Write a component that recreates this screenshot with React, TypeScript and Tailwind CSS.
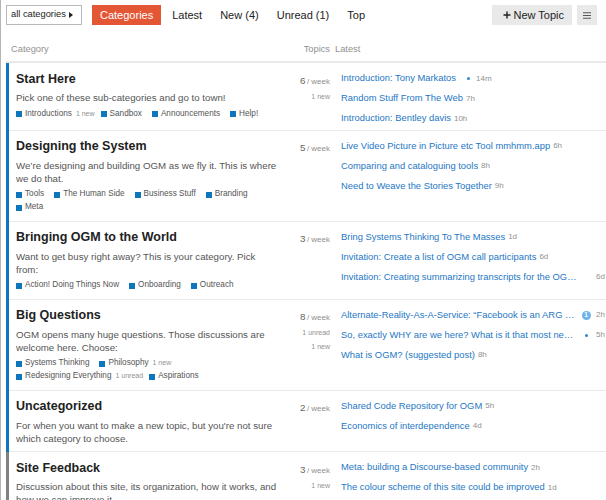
import React from "react";

type Latest = { t: string; time: string; trunc?: boolean; dot?: boolean; badge?: string };
type Sub = { name: string; count?: string };
type Row = {
  title: string;
  desc: string[];
  subs: Sub[];
  count: string;
  extra: string[];
  grey?: boolean;
  latest: Latest[];
};

const rows: Row[] = [
  {
    title: "Start Here",
    desc: ["Pick one of these sub-categories and go to town!"],
    subs: [{ name: "Introductions", count: "1 new" }, { name: "Sandbox" }, { name: "Announcements" }, { name: "Help!" }],
    count: "6",
    extra: ["1 new"],
    latest: [
      { t: "Introduction: Tony Markatos", time: "14m", dot: true },
      { t: "Random Stuff From The Web", time: "7h" },
      { t: "Introduction: Bentley davis", time: "10h" },
    ],
  },
  {
    title: "Designing the System",
    desc: ["We\u2019re designing and building OGM as we fly it. This is where", "we do that."],
    subs: [{ name: "Tools" }, { name: "The Human Side" }, { name: "Business Stuff" }, { name: "Branding" }, { name: "Meta" }],
    count: "5",
    extra: [],
    latest: [
      { t: "Live Video Picture in Picture etc Tool mmhmm.app", time: "6h" },
      { t: "Comparing and cataloguing tools", time: "8h" },
      { t: "Need to Weave the Stories Together", time: "9h" },
    ],
  },
  {
    title: "Bringing OGM to the World",
    desc: ["Want to get busy right away? This is your category. Pick", "from:"],
    subs: [{ name: "Action! Doing Things Now" }, { name: "Onboarding" }, { name: "Outreach" }],
    count: "3",
    extra: [],
    latest: [
      { t: "Bring Systems Thinking To The Masses", time: "1d" },
      { t: "Invitation: Create a list of OGM call participants", time: "6d" },
      { t: "Invitation: Creating summarizing transcripts for the OGM call recordings", time: "6d", trunc: true },
    ],
  },
  {
    title: "Big Questions",
    desc: ["OGM opens many huge questions. Those discussions are", "welcome here. Choose:"],
    subs: [
      { name: "Systems Thinking" },
      { name: "Philosophy", count: "1 new" },
      { name: "Redesigning Everything", count: "1 unread" },
      { name: "Aspirations" },
    ],
    count: "8",
    extra: ["1 unread", "1 new"],
    latest: [
      { t: "Alternate-Reality-As-A-Service: \u201CFacebook is an ARG (alternate reality game)\u201D", time: "2h", trunc: true, badge: "1" },
      { t: "So, exactly WHY are we here? What is it that most needs doing?", time: "5h", trunc: true, dot: true },
      { t: "What is OGM? (suggested post)", time: "8h" },
    ],
  },
  {
    title: "Uncategorized",
    desc: ["For when you want to make a new topic, but you're not sure", "which category to choose."],
    subs: [],
    count: "2",
    extra: [],
    latest: [
      { t: "Shared Code Repository for OGM", time: "5h" },
      { t: "Economics of interdependence", time: "4d" },
    ],
  },
  {
    title: "Site Feedback",
    desc: ["Discussion about this site, its organization, how it works, and", "how we can improve it."],
    subs: [],
    count: "3",
    extra: ["1 new"],
    grey: true,
    latest: [
      { t: "Meta: building a Discourse-based community", time: "2h" },
      { t: "The colour scheme of this site could be improved", time: "1d" },
    ],
  },
];

function LatestItem({ item }: { item: Latest }) {
  return (
    <div className="flex items-center h-[20px] whitespace-nowrap">
      <span
        className={
          item.trunc
            ? "block w-[236px] overflow-hidden text-ellipsis whitespace-nowrap text-[9.4px] text-[#1e77c5]"
            : "text-[9.4px] text-[#1e77c5]"
        }
      >
        {item.t}
      </span>
      {item.trunc ? (
        <span className="w-[18px] flex items-center justify-center shrink-0">
          {item.badge ? (
            <span className="w-[9px] h-[9px] rounded-full bg-[#6cb4ea] text-white text-[6.5px] font-bold flex items-center justify-center leading-none">
              {item.badge}
            </span>
          ) : item.dot ? (
            <span className="w-[3px] h-[3px] rounded-full bg-[#2f86d6]" />
          ) : null}
        </span>
      ) : item.dot ? (
        <span className="ml-[7px] w-[10px] flex items-center justify-center shrink-0">
          <span className="w-[3px] h-[3px] rounded-full bg-[#2f86d6]" />
        </span>
      ) : null}
      <span className={item.trunc ? "ml-[1px] text-[8px] text-[#919191]" : "ml-[3px] text-[8px] text-[#919191]"}>
        {item.time}
      </span>
    </div>
  );
}

function CategoryRow({ row }: { row: Row }) {
  return (
    <div className="flex">
      <div className={row.grey ? "w-[3px] shrink-0 bg-[#808281]" : "w-[3px] shrink-0 bg-[#0e76bd]"} />
      <div className="flex flex-1 border-b border-[#e9e9e9]">
        <div className="w-[281px] shrink-0 pl-[7px] pt-[7.5px] pb-[6.5px]">
          <div className="w-[262px]">
            <div className="text-[12.5px] leading-[16px] font-bold text-[#222]">{row.title}</div>
            <div className="mt-[4.5px] text-[9.7px] leading-[13px] text-[#555]">
              {row.desc.map((l) => (
                <div key={l} className="whitespace-nowrap">
                  {l}
                </div>
              ))}
            </div>
            {row.subs.length > 0 && (
              <div className="mt-[3.5px] flex flex-wrap">
                {row.subs.map((s) => (
                  <div
                    key={s.name}
                    className={s.count ? "flex items-center h-[13px] mr-[6px]" : "flex items-center h-[13px] mr-[10px]"}
                  >
                    <span className="w-[6px] h-[6px] bg-[#0e76bd] shrink-0" />
                    <span className="ml-[3px] text-[8.2px] text-[#555] whitespace-nowrap">{s.name}</span>
                    {s.count && (
                      <span className="ml-[4px] text-[7px] text-[#919191] whitespace-nowrap">{s.count}</span>
                    )}
                  </div>
                ))}
              </div>
            )}
          </div>
        </div>
        <div className="w-[40px] shrink-0 text-right pt-[7.5px]">
          <div className="leading-[16px] whitespace-nowrap">
            <span className="text-[9.8px] text-[#666]">{row.count}</span>
            <span className="ml-[1.5px] text-[8px] text-[#8f8f8f]">/ week</span>
          </div>
          {row.extra.map((e) => (
            <div key={e} className="text-[7px] leading-[14px] text-[#919191] whitespace-nowrap">
              {e}
            </div>
          ))}
        </div>
        <div className="ml-[11px] pt-[5.5px] pb-[1px] flex-1 min-w-0">
          {row.latest.map((l) => (
            <LatestItem key={l.t} item={l} />
          ))}
        </div>
      </div>
    </div>
  );
}

export default function App() {
  return (
    <div
      className="w-[606px] h-[500px] overflow-hidden bg-white border-l border-[#b4b4b4] pl-[5px]"
      style={{ fontFamily: '"Liberation Sans", Arial, Helvetica, sans-serif' }}
    >
      {/* top nav */}
      <div className="flex items-center h-[20px] mt-[5px] pr-[9px]">
        <div className="h-[19.5px] w-[76px] border border-[#b9b9b9] bg-white flex items-center pl-[4px] text-[9.3px] text-[#222] whitespace-nowrap">
          all categories
          <span className="ml-[3px] w-0 h-0 border-y-[3px] border-y-transparent border-l-[4px] border-l-[#222]" />
        </div>
        <div className="ml-[10px] h-[19.5px] bg-[#e45735] text-white text-[11px] px-[8px] flex items-center">
          Categories
        </div>
        <div className="ml-[2px] px-[9px] text-[11px] text-[#222]">Latest</div>
        <div className="px-[9px] text-[11px] text-[#222]">New (4)</div>
        <div className="px-[9px] text-[11px] text-[#222]">Unread (1)</div>
        <div className="px-[9px] text-[11px] text-[#222]">Top</div>
        <div className="ml-auto flex items-center gap-[5px]">
          <div className="h-[19.5px] bg-[#e9e9e9] pl-[11px] pr-[8px] flex items-center text-[11px] text-[#222]">
            <svg width="8" height="8" viewBox="0 0 8 8" className="mr-[2px]">
              <path d="M4 0.5V7.5M0.5 4H7.5" stroke="#222" strokeWidth="1.4" />
            </svg>
            New Topic
          </div>
          <div className="h-[19.5px] w-[20px] bg-[#e9e9e9] flex items-center justify-center">
            <svg width="8" height="7" viewBox="0 0 8 7">
              <path d="M0 0.75H8M0 3.5H8M0 6.25H8" stroke="#555" strokeWidth="1.2" />
            </svg>
          </div>
        </div>
      </div>

      {/* table header */}
      <div className="mt-[18px] flex border-b-2 border-[#e9e9e9] pb-[6px] text-[9.3px] leading-[12px] text-[#919191]">
        <div className="w-[284px] pl-[5px]">Category</div>
        <div className="w-[40px] text-right">Topics</div>
        <div className="ml-[5px]">Latest</div>
      </div>

      {rows.map((r) => (
        <CategoryRow key={r.title} row={r} />
      ))}
    </div>
  );
}
